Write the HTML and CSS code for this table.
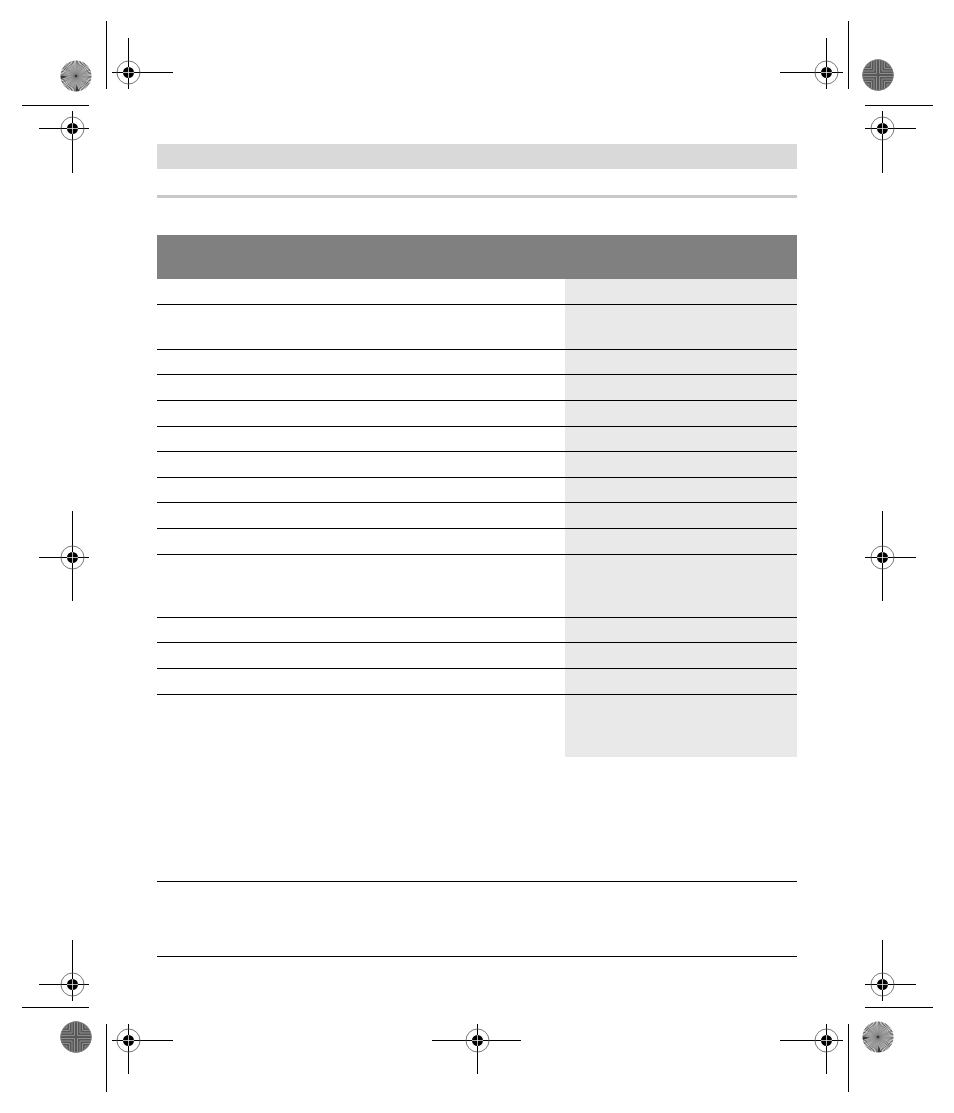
FILE: index.html
```html
<!DOCTYPE html>
<html lang="en">
<head>
<meta charset="utf-8">
<title>Page</title>
<link rel="stylesheet" href="styles.css">
</head>
<body>
<div class="page">
  <div class="sheet">
    <div class="topbar"></div>
    <div class="rule"></div>
    <div class="table">
      <div class="thead"></div>
      <div class="row"><div class="c1"></div><div class="c2"></div></div>
      <div class="row dbl"><div class="c1"></div><div class="c2"></div></div>
      <div class="row"><div class="c1"></div><div class="c2"></div></div>
      <div class="row"><div class="c1"></div><div class="c2"></div></div>
      <div class="row"><div class="c1"></div><div class="c2"></div></div>
      <div class="row"><div class="c1"></div><div class="c2"></div></div>
      <div class="row"><div class="c1"></div><div class="c2"></div></div>
      <div class="row"><div class="c1"></div><div class="c2"></div></div>
      <div class="row"><div class="c1"></div><div class="c2"></div></div>
      <div class="row"><div class="c1"></div><div class="c2"></div></div>
      <div class="row tpl"><div class="c1"></div><div class="c2"></div></div>
      <div class="row"><div class="c1"></div><div class="c2"></div></div>
      <div class="row"><div class="c1"></div><div class="c2"></div></div>
      <div class="row"><div class="c1"></div><div class="c2"></div></div>
      <div class="row last"><div class="c1"></div><div class="c2"></div></div>
    </div>
    <div class="foot">
      <div class="fline"></div>
      <div class="fline second"></div>
    </div>
  </div>

  <svg class="marks" width="954" height="1113" viewBox="0 0 954 1113" xmlns="http://www.w3.org/2000/svg">
    <defs>
      <radialGradient id="bg" cx="0.5" cy="0.5" r="0.5">
        <stop offset="0" stop-color="#555" stop-opacity="1"/>
        <stop offset="0.2" stop-color="#8a8a8a" stop-opacity="0.95"/>
        <stop offset="0.5" stop-color="#9c9c9c" stop-opacity="0.6"/>
        <stop offset="0.85" stop-color="#aaaaaa" stop-opacity="0"/>
      </radialGradient>
      <clipPath id="cc"><circle r="15.5"/></clipPath>
      <g id="tgt">
        <circle r="11.5" fill="none" stroke="#555" stroke-width="0.8"/>
        <circle r="5.5" fill="#000"/>
        <path d="M-5.5 0H5.5M0 -5.5V5.5" stroke="#fff" stroke-width="0.7"/>
      </g>
      <g id="burst">
        <circle r="15.5" fill="#fff"/>
        <circle r="8" fill="none" stroke="#333" stroke-width="15" pathLength="128" stroke-dasharray="1 1"/>
        <circle r="15.5" fill="url(#bg)"/>
        <circle r="1" fill="#222"/>
      </g>
      <g id="cross">
        <circle r="15.5" fill="#575757"/>
        <g clip-path="url(#cc)" fill="none" stroke="#8e8e8e" stroke-width="1">
          <path d="M-1.5 -16H1.5V-1.5H16V1.5H1.5V16H-1.5V1.5H-16V-1.5H-1.5Z"/>
          <path d="M-4 -16H4V-4H16V4H4V16H-4V4H-16V-4H-4Z"/>
          <path d="M-6.5 -16H6.5V-6.5H16V6.5H6.5V16H-6.5V6.5H-16V-6.5H-6.5Z"/>
          <path d="M-9 -16H9V-9H16V9H9V16H-9V9H-16V-9H-9Z"/>
        </g>
        <circle r="15.2" fill="none" stroke="#7a7a7a" stroke-width="0.6"/>
      </g>
    </defs>

    <g stroke="#000" stroke-width="1" shape-rendering="crispEdges">
      <line x1="106.5" y1="21" x2="106.5" y2="89"/>
      <line x1="848.5" y1="21" x2="848.5" y2="89"/>
      <line x1="106.5" y1="1024" x2="106.5" y2="1092"/>
      <line x1="848.5" y1="1024" x2="848.5" y2="1092"/>
      <line x1="22" y1="105.5" x2="89" y2="105.5"/>
      <line x1="865" y1="105.5" x2="933" y2="105.5"/>
      <line x1="22" y1="1007.5" x2="89" y2="1007.5"/>
      <line x1="865" y1="1007.5" x2="933" y2="1007.5"/>

      <line x1="128.5" y1="38" x2="128.5" y2="89"/><line x1="112" y1="72.5" x2="173" y2="72.5"/>
      <line x1="72.5" y1="111" x2="72.5" y2="173"/><line x1="39" y1="128.5" x2="89" y2="128.5"/>
      <line x1="826.5" y1="38" x2="826.5" y2="89"/><line x1="780" y1="72.5" x2="843" y2="72.5"/>
      <line x1="882.5" y1="111" x2="882.5" y2="173"/><line x1="865" y1="128.5" x2="916" y2="128.5"/>

      <line x1="72.5" y1="511" x2="72.5" y2="601"/><line x1="39" y1="557.5" x2="89" y2="557.5"/>
      <line x1="882.5" y1="511" x2="882.5" y2="601"/><line x1="865" y1="557.5" x2="916" y2="557.5"/>

      <line x1="72.5" y1="940" x2="72.5" y2="1001"/><line x1="39" y1="984.5" x2="89" y2="984.5"/>
      <line x1="882.5" y1="940" x2="882.5" y2="1001"/><line x1="865" y1="984.5" x2="916" y2="984.5"/>
      <line x1="128.5" y1="1024" x2="128.5" y2="1074"/><line x1="112" y1="1040.5" x2="173" y2="1040.5"/>
      <line x1="477.5" y1="1024" x2="477.5" y2="1074"/><line x1="432" y1="1040.5" x2="521" y2="1040.5"/>
      <line x1="826.5" y1="1024" x2="826.5" y2="1074"/><line x1="780" y1="1040.5" x2="843" y2="1040.5"/>
    </g>

    <use href="#tgt" x="128.5" y="72.5"/>
    <use href="#tgt" x="72.5" y="128.5"/>
    <use href="#tgt" x="826.5" y="72.5"/>
    <use href="#tgt" x="882.5" y="128.5"/>
    <use href="#tgt" x="72.5" y="557.5"/>
    <use href="#tgt" x="882.5" y="557.5"/>
    <use href="#tgt" x="72.5" y="984.5"/>
    <use href="#tgt" x="882.5" y="984.5"/>
    <use href="#tgt" x="128.5" y="1040.5"/>
    <use href="#tgt" x="477.5" y="1040.5"/>
    <use href="#tgt" x="826.5" y="1040.5"/>

    <use href="#burst" x="76" y="76"/>
    <use href="#burst" x="878" y="1037"/>
    <use href="#cross" x="878" y="75"/>
    <use href="#cross" x="76" y="1037"/>
  </svg>
</div>
</body>
</html>
```

FILE: styles.css
```css
body {
  margin: 0;
  background: #fff;
  font-family: "Liberation Sans", Arial, sans-serif;
}

.page {
  position: relative;
  width: 954px;
  height: 1113px;
  overflow: hidden;
}

.sheet {
  width: 640px;
  margin-left: 157px;
  padding-top: 144px;
}

.topbar {
  height: 25px;
  background: #d9d9d9;
}

.rule {
  margin-top: 26px;
  height: 3px;
  background: #c8c8c8;
}

.table {
  margin-top: 37px;
}

.thead {
  height: 44px;
  background: #808080;
}

.row {
  display: grid;
  grid-template-columns: 408px 232px;
  box-sizing: border-box;
  height: 25.65px;
  border-bottom: 1px solid #000;
}

.row.dbl {
  height: 45px;
}

.row.tpl {
  height: 63px;
}

.row.last {
  height: 62px;
  border-bottom: none;
}

.c2 {
  background: #e9e9e9;
}

.foot {
  margin-top: 124px;
}

.fline {
  height: 1px;
  background: #000;
}

.fline.second {
  margin-top: 74px;
}

.marks {
  position: absolute;
  left: 0;
  top: 0;
  pointer-events: none;
}
```
